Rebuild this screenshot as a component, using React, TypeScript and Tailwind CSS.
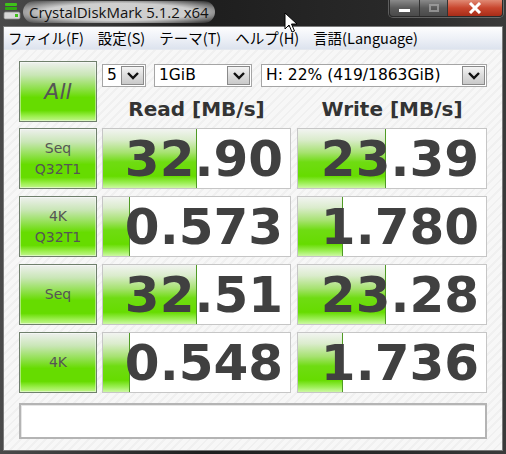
import React from 'react';

interface Result {
  label: string[];
  read: string;
  readBar: number;
  write: string;
  writeBar: number;
}

const results: Result[] = [
  { label: ['Seq', 'Q32T1'], read: '32.90', readBar: 94, write: '23.39', writeBar: 88 },
  { label: ['4K', 'Q32T1'], read: '0.573', readBar: 27, write: '1.780', writeBar: 45 },
  { label: ['Seq'], read: '32.51', readBar: 94, write: '23.28', writeBar: 88 },
  { label: ['4K'], read: '0.548', readBar: 27, write: '1.736', writeBar: 45 },
];

const menus = ['ファイル(F)', '設定(S)', 'テーマ(T)', 'ヘルプ(H)', '言語(Language)'];

const greenButton =
  'border border-[#6f7f6c] shadow-[inset_0_0_0_1px_rgba(255,255,255,0.45)] bg-[linear-gradient(to_bottom,#eef0ee_0%,#c9e6b6_22%,#8ee04a_45%,#66dc00_60%,#66dc00_82%,#9cef4e_92%,#c2f58e_100%)] flex flex-col items-center justify-center text-[#555]';

const Chevron = () => (
  <svg width="14" height="9" viewBox="0 0 14 9">
    <polyline points="2,2 7,7 12,2" fill="none" stroke="#111" strokeWidth="2.4" />
  </svg>
);

const Combo = ({ value, width }: { value: string; width: string }) => (
  <div className={`${width} h-[23px] flex bg-white border border-[#a5a5a5]`}>
    <div className="flex-1 flex items-center pl-[4px] text-[15.5px] text-black leading-none">{value}</div>
    <div className="w-[23px] m-[1px] flex items-center justify-center border border-[#8a8a8a] bg-[linear-gradient(to_bottom,#f4f4f4,#dcdcdc_50%,#c9c9c9)]">
      <Chevron />
    </div>
  </div>
);

const Cell = ({ value, bar, width }: { value: string; bar: number; width: string }) => (
  <div className={`${width} h-full relative bg-white border border-[#c6c6c6] flex items-center justify-end`}>
    <div
      className="absolute left-0 top-0 bottom-0 border-r border-[#4f9a24] bg-[linear-gradient(to_bottom,#f2f4f1_0%,#dbeccd_18%,#a6e270_40%,#6fdc12_56%,#66dc00_80%,#9ff05a_92%,#cdf8a4_100%)]"
      style={{ width: bar }}
    />
    <span className="relative pr-[7px] text-[50px] font-bold leading-none text-[#404040] font-['DejaVu_Sans',sans-serif]">
      {value}
    </span>
  </div>
);

const AppIcon = () => (
  <svg width="18" height="18" viewBox="0 0 18 18">
    <rect x="2" y="1" width="12" height="3" rx="1" fill="#3fc21a" />
    <rect x="2" y="5" width="12" height="3" rx="1" fill="#2fa810" />
    <rect x="1" y="10" width="16" height="7" rx="1.5" fill="#d8d8d8" stroke="#8a8a8a" strokeWidth="0.8" />
    <rect x="12" y="12" width="3" height="3" fill="#3fc21a" />
  </svg>
);

export default function App() {
  return (
    <div className="w-[506px] h-[454px] relative flex flex-col overflow-hidden bg-[linear-gradient(to_right,#4a4a4a,#1e1e1e_40%,#2a2a2a_80%,#3a3a3a)] font-['DejaVu_Sans',sans-serif]">
      {/* title bar */}
      <div className="h-[26px] flex items-start">
        <div className="ml-[3px] mt-[2px]">
          <AppIcon />
        </div>
        <div className="ml-[2px] mt-[1px] px-[6px] h-[22px] flex items-center rounded-full bg-[radial-gradient(ellipse_at_center,rgba(215,215,215,0.95)_55%,rgba(190,190,190,0.5)_80%,rgba(120,120,120,0)_100%)] text-[15px] text-[#111] font-['Open_Sans',sans-serif]">
          CrystalDiskMark 5.1.2 x64
        </div>
        <div className="ml-auto mr-[3px] flex h-[17px] rounded-b-[4px] border border-t-0 border-[#2a2a2a] overflow-hidden shadow-[0_0_0_1px_rgba(255,255,255,0.25)]">
          <div className="w-[30px] flex items-center justify-center bg-[linear-gradient(to_bottom,#8a8a8a,#5a5a5a_50%,#4a4a4a)] border-r border-[#333]">
            <div className="w-[11px] h-[3px] bg-white mt-[4px]" />
          </div>
          <div className="w-[28px] flex items-center justify-center bg-[linear-gradient(to_bottom,#8a8a8a,#5a5a5a_50%,#4a4a4a)] border-r border-[#333]">
            <div className="w-[10px] h-[8px] border-2 border-[#aaa] opacity-70" />
          </div>
          <div className="w-[54px] flex items-center justify-center bg-[linear-gradient(to_bottom,#e08a74,#c8462e_50%,#a82c18)]">
            <svg width="14" height="12" viewBox="0 0 14 12">
              <path d="M2 1 L12 11 M12 1 L2 11" stroke="white" strokeWidth="3" />
            </svg>
          </div>
        </div>
      </div>

      {/* client area */}
      <div className="flex-1 mx-[3px] mb-[3px] border border-[#7a7a7a] flex flex-col">
        <div className="h-[23px] flex items-center gap-[14px] pl-[4px] bg-[linear-gradient(to_bottom,#fdfdfe,#eef1f7_50%,#dde3ee)] border-b border-[#e4e8ee] text-[14.5px] text-black font-['Noto_Sans_CJK_JP',sans-serif]">
          {menus.map(m => (
            <span key={m} className="whitespace-nowrap">{m}</span>
          ))}
        </div>

        <div className="flex-1 pl-[15px] pt-[11px] bg-[repeating-linear-gradient(135deg,#f7f7f7_0px,#f7f7f7_4px,#f0f0f0_4px,#f0f0f0_6px)]">
          <div className="flex h-[61px] gap-[5px]">
            <div className={`w-[78px] ${greenButton}`}>
              <span className="text-[22px] italic leading-none">All</span>
            </div>
            <div className="w-[385px] flex flex-col">
              <div className="flex mt-[3px]">
                <Combo value="5" width="w-[44px]" />
                <div className="ml-[8px]"><Combo value="1GiB" width="w-[98px]" /></div>
                <div className="ml-[9px]"><Combo value="H: 22% (419/1863GiB)" width="w-[226px]" /></div>
              </div>
              <div className="flex-1 flex items-end gap-[6px] pb-[1px]">
                <div className="w-[189px] text-center text-[20px] font-bold text-[#333] leading-[24px]">Read [MB/s]</div>
                <div className="w-[190px] text-center text-[20px] font-bold text-[#333] leading-[24px]">Write [MB/s]</div>
              </div>
            </div>
          </div>

          <div className="mt-[6px] flex flex-col gap-[7px]">
            {results.map(r => (
              <div key={r.label.join('-') + r.read} className="flex h-[61px]">
                <div className={`w-[78px] ${greenButton} text-[14px] leading-[21px]`}>
                  {r.label.map(l => (
                    <span key={l}>{l}</span>
                  ))}
                </div>
                <div className="ml-[5px] h-full">
                  <Cell value={r.read} bar={r.readBar} width="w-[189px]" />
                </div>
                <div className="ml-[6px] h-full">
                  <Cell value={r.write} bar={r.writeBar} width="w-[190px]" />
                </div>
              </div>
            ))}
          </div>

          <div className="mt-[10px] w-[468px] h-[36px] bg-white border-2 border-[#b4b4b4] shadow-[inset_1px_1px_0_#e6e6e6]" />
        </div>
      </div>

      {/* mouse cursor */}
      <svg className="absolute left-[284px] top-[12px]" width="14" height="22" viewBox="0 0 14 22">
        <path d="M1 1 L1 17 L5 13 L8 20 L10.5 19 L7.5 12 L13 12 Z" fill="white" stroke="black" strokeWidth="1" />
      </svg>
    </div>
  );
}
